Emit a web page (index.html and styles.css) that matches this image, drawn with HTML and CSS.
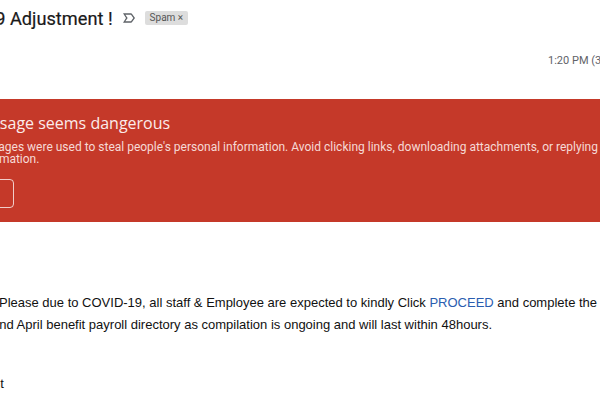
FILE: index.html
```html
<!DOCTYPE html>
<html>
<head>
<meta charset="utf-8">
<link rel="stylesheet" href="styles.css">
</head>
<body>
<div class="page">
  <div class="subject-row">
    <h1 class="subject">19 Adjustment !</h1>
    <svg class="imp" viewBox="0 0 24 24" width="16" height="16"><path fill="#5f6368" d="M15 19H3l4.5-7L3 5h12c.65 0 1.26.31 1.63.84L21 12l-4.37 6.16c-.37.52-.98.84-1.63.84zm-8.5-2H15l3.5-5L15 7H6.5l3.5 5-3.5 5z"/></svg>
    <span class="chip">Spam <span class="x">×</span></span>
  </div>
  <div class="meta-row">
    <span class="time">1:20 PM (3 hours ago)</span>
  </div>
  <div class="warning">
    <div class="warn-inner">
      <div class="warn-title">This message seems dangerous</div>
      <div class="warn-text">Similar messages were used to steal people's personal information. Avoid clicking links, downloading attachments, or replying with<br>personal information.</div>
      <div class="warn-btn">Looks safe</div>
    </div>
  </div>
  <div class="body">
    <p class="para">Please due to COVID-19, all staff &amp; Employee are expected to kindly Click <a class="link">PROCEED</a> and complete the<br>and April benefit payroll directory as compilation is ongoing and will last within 48hours.</p>
    <p class="sign">Management</p>
  </div>
</div>
</body>
</html>
```
FILE: styles.css
```css
html, body {
  margin: 0;
  padding: 0;
  background: #fff;
  overflow: hidden;
}
.page {
  width: 600px;
  height: 406px;
  overflow: hidden;
  font-family: Roboto, "Liberation Sans", sans-serif;
}
.subject-row {
  display: flex;
  align-items: center;
  height: 36px;
  white-space: nowrap;
}
.subject {
  margin: 0 0 0 -15px;
  font-family: Roboto, "Open Sans", sans-serif;
  font-weight: 400;
  font-size: 18.2px;
  color: #1a1a1a;
  -webkit-text-stroke: 0.2px #1a1a1a;
}
.imp {
  margin-left: 8px;
}
.chip {
  margin-left: 8px;
  background: #ddd;
  color: #555;
  font-size: 10px;
  border-radius: 2px;
  padding: 1px 5px;
  line-height: 12px;
}
.chip .x {
  font-size: 10px;
}
.meta-row {
  display: flex;
  justify-content: flex-start;
  padding-left: 548px;
  height: 48px;
  align-items: center;
  white-space: nowrap;
}
.time {
  font-size: 11px;
  color: #5f6368;
}
.warning {
  margin-top: 15px;
  background: #c53929;
  height: 123px;
  overflow: hidden;
}
.warn-inner {
  margin-left: -66px;
  padding-top: 14px;
  white-space: nowrap;
  color: #fff;
}
.warn-title {
  font-family: "Open Sans", Roboto, sans-serif;
  font-size: 16px;
  line-height: 20px;
  color: #fbeceb;
}
.warn-text {
  margin-top: 8px;
  margin-left: -9px;
  text-indent: 4px;
  font-size: 12px;
  line-height: 12px;
  color: #f6dad6;
}
.warn-btn {
  margin-top: 14px;
  margin-left: 8px;
  width: 70px;
  height: 27px;
  border: 1px solid rgba(255,255,255,0.75);
  border-radius: 4px;
  color: transparent;
  font-size: 12px;
  line-height: 27px;
  text-align: center;
}
.body {
  padding-top: 70px;
  font-family: "Liberation Sans", Arial, sans-serif;
  font-size: 13px;
  color: #111;
  white-space: nowrap;
}
.para {
  margin: 0 0 0 -8px;
  text-indent: 7px;
  line-height: 22px;
}
.link {
  color: #2a5db0;
}
.sign {
  margin: 37px 0 0 -72px;
  line-height: 22px;
}
```
